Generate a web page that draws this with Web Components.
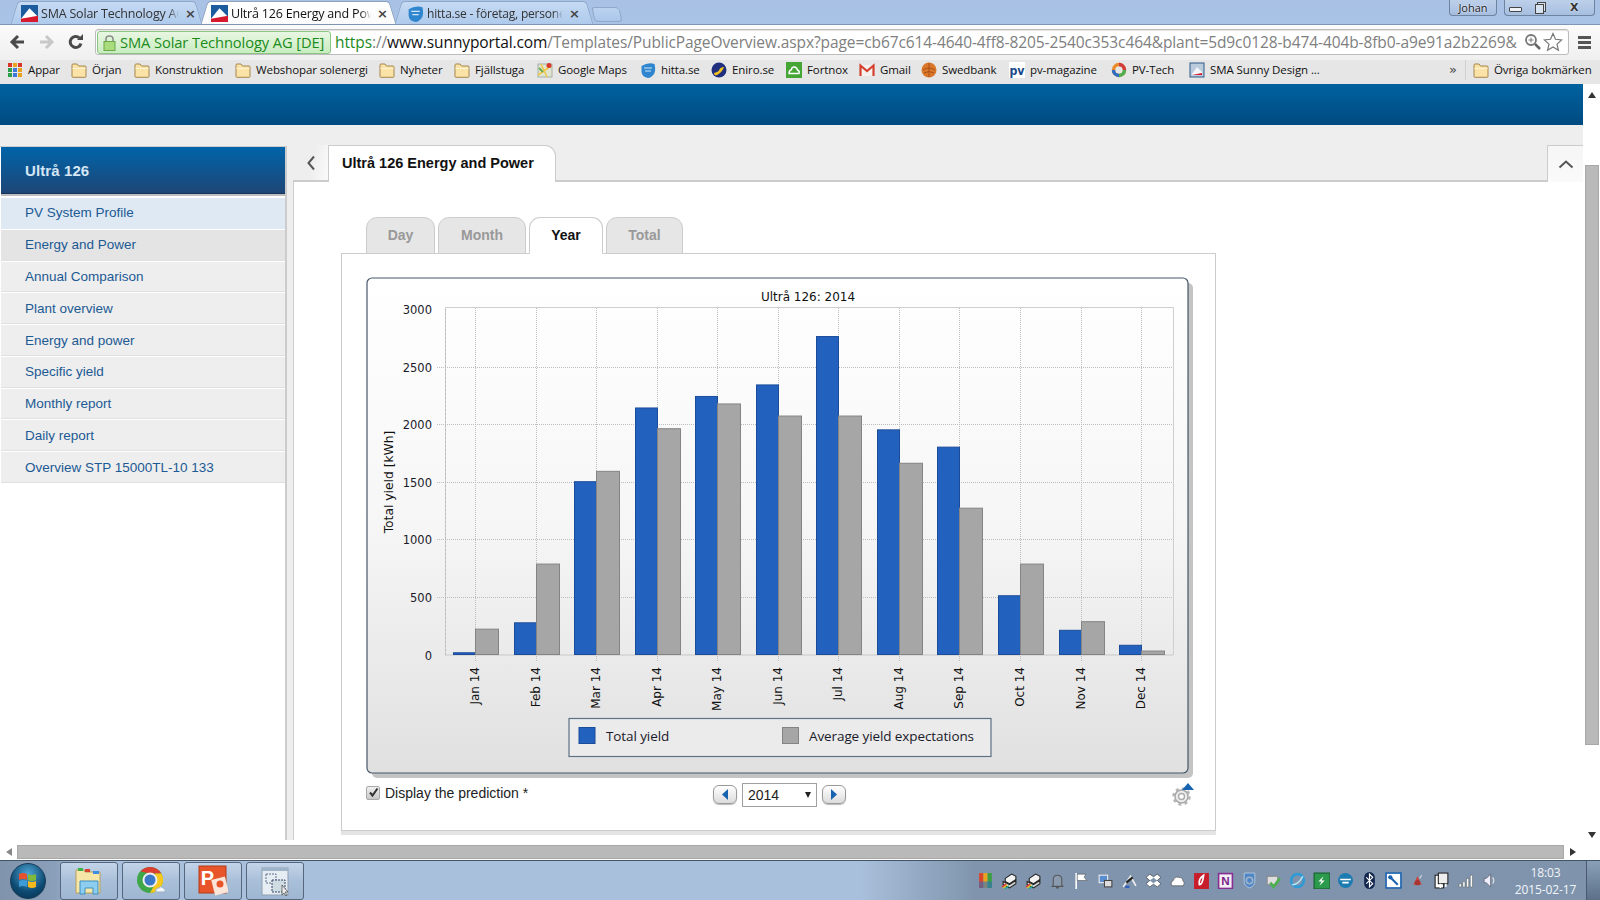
<!DOCTYPE html>
<html>
<head>
<meta charset="utf-8">
<title>Ultrå 126 Energy and Power</title>
<style>
  html, body { margin: 0; padding: 0; width: 1600px; height: 900px; overflow: hidden; background: #eee; }
  body { display: flex; flex-direction: column; font-family: "Liberation Sans", sans-serif; }
</style>
</head>
<body>
<browser-chrome></browser-chrome>
<portal-page></portal-page>
<page-hscroll></page-hscroll>
<win-taskbar></win-taskbar>

<script>
const svg16 = (body, size = 16) => `<svg width="${size}" height="${size}" viewBox="0 0 16 16" style="display:block;flex:none">${body}</svg>`;

const ICONS = {
  sma: `<rect width="16" height="16" fill="#1c5c9e"/><path d="M0 13L8 3l8 8v5H0z" fill="#fff"/><path d="M0 16v-3l16-3v6z" fill="#d7192d"/>`,
  hitta: `<path d="M1.500 4Q8 0 14.500 2q1.500 6-.5 10-3 4-6 4-6-1-6.500-6z" fill="#2f86cf"/><path d="M4 6h8M5 9h6" stroke="#cfe6fa" stroke-width="1.200"/>`,
  folder: `<path d="M1 14.500V3q0-1 1-1h4l1.500 2h6.500q1 0 1 1v9.500q0 .8-1 .8H2q-1 0-1-.8z" fill="#fbe2a6" stroke="#a5874e"/><path d="M1.500 6.500h13" stroke="#fff3d2"/>`,
  apps: [0,1,2].map(r => [0,1,2].map(c => `<rect x="${c*5+1}" y="${r*5+1}" width="4" height="4" fill="${[['#d9352a','#e8a21f','#d9352a'],['#2f9e4a','#3d79d8','#e8a21f'],['#2f9e4a','#3d79d8','#e8a21f']][r][c]}"/>`).join('')).join(''),
  maps: `<rect x="1" y="2" width="14" height="13" fill="#dfe5d2" stroke="#8d9a8d" stroke-width=".7"/><path d="M1 13L14 4M4 2l6 13" stroke="#f1c84a" stroke-width="1.600"/><path d="M2 6l4 4" stroke="#6da853" stroke-width="2"/><circle cx="12" cy="3.500" r="2.500" fill="#d8392b"/>`,
  eniro: `<circle cx="8" cy="8" r="7.500" fill="#1f2f7e"/><path d="M3 11Q8 10 9 6.500 11 4.500 13 5 11 11 5 13.500 3 13 3 11z" fill="#f3c21f"/>`,
  fortnox: `<rect width="16" height="16" fill="#45a535"/><path d="M3 11.500h10q1-2.500-1.500-3.500-1-3.500-4-3-2 .5-2 2.500Q3 8.500 3 11.500z" fill="none" stroke="#fff" stroke-width="1.400"/>`,
  gmail: `<rect x="1" y="3" width="14" height="11" fill="#f4f1ee"/><path d="M1.500 14V3.500L8 9l6.500-5.500V14" fill="none" stroke="#d5412f" stroke-width="2.200"/>`,
  swedbank: `<circle cx="8" cy="8" r="7.500" fill="#d9772b"/><path d="M2 8q6-4 12 0M3 11q5-3 10 0M8 1v14" stroke="#a84d18" stroke-width=".9" fill="none"/>`,
  pv: `<rect width="16" height="16" fill="#fff"/><text transform="translate(8 12.500) scale(.85 1)" text-anchor="middle" font-family="DejaVu Sans" font-weight="700" font-size="13" fill="#1b4a8a">pv</text>`,
  pvtech: `<circle cx="8" cy="8" r="5.500" fill="none" stroke-width="3.400" stroke="#e8892b"/><path d="M8 2.500A5.500 5.500 0 0 1 13.500 8" fill="none" stroke="#d23b3b" stroke-width="3.400"/><path d="M13.500 8A5.500 5.500 0 0 1 8 13.500" fill="none" stroke="#4caf50" stroke-width="3.400"/><path d="M8 13.500A5.500 5.500 0 0 1 2.500 8" fill="none" stroke="#2e6dc4" stroke-width="3.400"/>`,
  design: `<rect x="1" y="1" width="14" height="14" fill="#b9cbdc" stroke="#2f5a85"/><path d="M3 12L8 5l5 5v3H3z" fill="#f3f6f9"/><path d="M3 13l10-2v2z" fill="#d7192d"/>`
};

class BrowserTab extends HTMLElement {
  connectedCallback() {
    const active = this.hasAttribute('active');
    const bg = active ? 'linear-gradient(#fff,#fbfbfb)' : 'linear-gradient(#c6daf3,#aecaec)';
    const line = active ? '#8fa3bd' : '#8ea8c8';
    this.attachShadow({ mode: 'open' }).innerHTML = `
      <style>
        :host { display: flex; align-items: center; position: relative; width: ${this.getAttribute('w')}px; height: 24px; box-sizing: border-box; padding: 2px ${this.getAttribute('pr') || 9}px 0 ${this.getAttribute('pad') || 10}px; font: ${this.getAttribute('fs') || 12.5}px "Open Sans", sans-serif; letter-spacing: -.2px; color: ${active ? '#111' : '#333'}; z-index: ${active ? 2 : 1}; margin-right: -1px; flex: none; }
        .l, .r { position: absolute; top: 1px; bottom: 0; width: 55%; background: ${bg}; border-top: 1px solid ${line}; box-sizing: border-box; z-index: -1; }
        .l { left: 3px; transform: skewX(-17deg); border-left: 1px solid ${line}; border-top-left-radius: 4px; }
        .r { right: 3px; transform: skewX(17deg); border-right: 1px solid ${line}; border-top-right-radius: 4px; }
        .t { flex: 1; min-width: 0; margin-left: 3px; overflow: hidden; white-space: nowrap; -webkit-mask-image: linear-gradient(to left, transparent, #000 10px); }
        .x { width: 10px; flex: none; margin-left: 6px; color: #444; font: 700 13px "DejaVu Sans", sans-serif; }
      </style>
      <div class="l"></div><div class="r"></div>
      ${svg16(ICONS[this.getAttribute('icon')], 17)}
      <span class="t"><slot></slot></span><span class="x">×</span>`;
  }
}
customElements.define('browser-tab', BrowserTab);

class BookMark extends HTMLElement {
  connectedCallback() {
    const gap = this.getAttribute('gap') || 5;
    this.attachShadow({ mode: 'open' }).innerHTML = `
      <style>
        :host { display: flex; align-items: center; gap: ${gap}px; width: ${this.getAttribute('w')}px; flex: none; white-space: nowrap; }
      </style>
      ${svg16(ICONS[this.getAttribute('icon')])}<slot></slot>`;
  }
}
customElements.define('book-mark', BookMark);

class BrowserChrome extends HTMLElement {
  constructor() {
    super();
    this.attachShadow({ mode: 'open' }).innerHTML = `
      <style>
        :host { display: block; height: 84px; flex: none; }
        .strip { height: 24px; background: linear-gradient(#a8c1e4,#a9c3e6); display: flex; padding-left: 11px; position: relative; border-bottom: 1px solid #7f95b3; }
        .newtab { width: 26px; height: 13px; margin: 7px 0 0 1px; background: linear-gradient(#bcd3f0,#a9c6ea); border: 1px solid #8ea8c8; border-radius: 3px 5px 4px 4px; transform: skewX(12deg); flex: none; }
        .win { margin-left: auto; display: flex; gap: 7px; padding-right: 5px; }
        .win div { height: 16px; box-sizing: border-box; border: 1px solid #6d83a0; border-top: 0; border-radius: 0 0 4px 4px; background: linear-gradient(#bdd0ea,#a6bedf); display: flex; align-items: center; color: #222; text-shadow: 0 0 2px #fff; font: 11px "Open Sans", sans-serif; }
        .user { width: 48px; justify-content: center; }
        .ctrl { width: 91px; }
        .ctrl i { display: block; flex: none; }
        .min { width: 11px; height: 3px; border: 1px solid #444; background: #eef3fa; border-radius: 1px; margin: 4px 0 0 4px; }
        .max { width: 7px; height: 8px; border: 1px solid #444; background: #d8e3f2; box-shadow: 2px -2px 0 -1px #d8e3f2, 2px -2px 0 0 #444; margin: 3px 0 0 13px; }
        .close { font: 700 11px "DejaVu Sans", sans-serif; color: #333; margin-left: 26px; }
        .bar { height: 35px; background: linear-gradient(#fbfbfb,#efefef); display: flex; align-items: center; box-sizing: border-box; padding: 0 0 1px 8px; }
        .nav { width: 87px; display: flex; flex: none; }
        .nav svg { margin-right: 5px; }
        .nav svg:nth-child(2) { margin-right: 10px; }
        .omni { flex: none; width: 1474px; height: 26px; box-sizing: border-box; background: #fff; border: 1px solid #bcbcbc; border-radius: 3px; display: flex; align-items: center; padding: 0 1px; position: relative; box-shadow: inset 0 1px 1px #e4e4e4; }
        .ev { flex: none; width: 234px; height: 23px; box-sizing: border-box; border: 1px solid #8cc584; border-radius: 3px; background: linear-gradient(#e8f7e2,#c9ecc0); color: #1d8a1d; font: 14.700px "Open Sans", sans-serif; letter-spacing: -.1px; display: flex; align-items: center; gap: 4px; padding-left: 5px; white-space: nowrap; overflow: hidden; }
        .url { margin-left: 4px; width: 1186px; overflow: hidden; white-space: nowrap; font: 15.500px "Open Sans", sans-serif; letter-spacing: -.1px; color: #808080; flex: none; }
        .url b { font-weight: 400; color: #1d8a1d; } .url em { font-style: normal; color: #111; }
        .lens { margin-left: 3px; flex: none; } .star { margin-left: 2px; flex: none; }
        .menu { margin-left: 9px; width: 13px; height: 13px; flex: none; background: linear-gradient(#555 0 3px, transparent 3px 5px, #555 5px 8px, transparent 8px 10px, #555 10px 13px); }
        .marks { height: 25px; box-sizing: border-box; background: #e6e6e6; border-bottom: 1px solid #b3b3b3; display: flex; align-items: center; padding: 0 0 5px 7px; font: 11.500px "Open Sans", sans-serif; letter-spacing: -.1px; color: #111; }
        .more { margin-left: 121px; width: 16px; color: #444; font: 13px "DejaVu Sans", sans-serif; border-right: 1px solid #d0d0d0; margin-right: 7px; height: 20px; line-height: 20px; }
      </style>
      <div class="strip">
        <browser-tab w="191" icon="sma" pr="7">SMA Solar Technology AG</browser-tab>
        <browser-tab w="195" icon="sma" active>Ultrå 126 Energy and Pow</browser-tab>
        <browser-tab w="198" icon="hitta" pad="12" pr="14" fs="12">hitta.se - företag, persone</browser-tab>
        <div class="newtab"></div>
        <div class="win"><div class="user">Johan</div><div class="ctrl"><i class="min"></i><i class="max"></i><span class="close">X</span></div></div>
      </div>
      <div class="bar">
        <div class="nav">
          <svg width="22" height="18" viewBox="0 0 22 18"><path d="M16 9H5M10 3L4 9l6 6" fill="none" stroke="#4a4a4a" stroke-width="3"/></svg>
          <svg width="22" height="18" viewBox="0 0 22 18"><path d="M5 9h11M11 3l6 6-6 6" fill="none" stroke="#c8c8c8" stroke-width="3"/></svg>
          <svg width="18" height="18" viewBox="0 0 18 18"><path d="M14 10.500A5.500 5.500 0 1 1 12.500 5" fill="none" stroke="#4a4a4a" stroke-width="3"/><path d="M10 7l6 0 0-6z" fill="#4a4a4a"/></svg>
        </div>
        <div class="omni">
          <div class="ev"><svg width="13" height="17" viewBox="0 0 13 17" style="flex:none"><path d="M3 8V5q0-3 3.500-3T10 5v3" fill="none" stroke="#8c8c8c" stroke-width="1.600"/><rect x="1" y="7.500" width="11" height="9" fill="#a8dc7c" stroke="#6aa84a"/></svg>SMA Solar Technology AG [DE]</div>
          <div class="url"><b>https</b>://<em>www.sunnyportal.com</em>/Templates/PublicPageOverview.aspx?page=cb67c614-4640-4ff8-8205-2540c353c464&amp;plant=5d9c0128-b474-404b-8fb0-a9e91a2b2269&amp;</div>
          <svg class="lens" width="17" height="18" viewBox="0 0 17 18"><circle cx="7" cy="7" r="5" fill="none" stroke="#777" stroke-width="1.800"/><path d="M11 11l5 5" stroke="#666" stroke-width="2.500"/><path d="M4.500 7h5M7 4.500v5" stroke="#777"/></svg>
          <svg class="star" width="20" height="20" viewBox="0 0 20 20"><path d="M10 1.500l2.500 5.800 6.200.6-4.700 4.200 1.400 6.200L10 15l-5.400 3.300L6 12.100 1.300 7.900l6.200-.6z" fill="#fff" stroke="#777" stroke-width="1.200"/></svg>
        </div>
        <div class="menu"></div>
      </div>
      <div class="marks">
        <book-mark w="64" icon="apps">Appar</book-mark>
        <book-mark w="63" icon="folder">Örjan</book-mark>
        <book-mark w="101" icon="folder">Konstruktion</book-mark>
        <book-mark w="144" icon="folder">Webshopar solenergi</book-mark>
        <book-mark w="75" icon="folder">Nyheter</book-mark>
        <book-mark w="83" icon="folder">Fjällstuga</book-mark>
        <book-mark w="103" icon="maps">Google Maps</book-mark>
        <book-mark w="71" icon="hitta">hitta.se</book-mark>
        <book-mark w="75" icon="eniro">Eniro.se</book-mark>
        <book-mark w="73" icon="fortnox">Fortnox</book-mark>
        <book-mark w="62" icon="gmail">Gmail</book-mark>
        <book-mark w="88" icon="swedbank">Swedbank</book-mark>
        <book-mark w="102" icon="pv">pv-magazine</book-mark>
        <book-mark w="78" icon="pvtech">PV-Tech</book-mark>
        <book-mark w="139" icon="design">SMA Sunny Design ...</book-mark>
        <span class="more">»</span>
        <book-mark w="120" icon="folder">Övriga bokmärken</book-mark>
      </div>`;
  }
}
customElements.define('browser-chrome', BrowserChrome);

class SideNav extends HTMLElement {
  constructor() {
    super();
    const items = ['PV System Profile','Energy and Power','Annual Comparison','Plant overview','Energy and power','Specific yield','Monthly report','Daily report','Overview STP 15000TL-10 133'];
    this.attachShadow({ mode: 'open' }).innerHTML = `
      <style>
        :host { display: block; width: 287px; flex: none; box-sizing: border-box; background: #fff; border-top: 1px solid #ccc; border-right: 2px solid #ccc; padding: 0 0 0 1px; font: 13.500px "Liberation Sans", sans-serif; }
        .head { height: 47px; background: linear-gradient(#0064a9,#1e4677); border-bottom: 1px solid #16355a; box-sizing: border-box; display: flex; align-items: center; padding-left: 24px; color: #d5e6f4; font-weight: 700; font-size: 15px; letter-spacing: .1px; }
        .rule { height: 4px; box-sizing: border-box; border-top: 2px solid #bdbdbd; background: #fff; margin-bottom: 0; }
        ul { list-style: none; margin: 0; padding: 0; height: 285px; display: flex; flex-direction: column; gap: 1px; }
        li { flex: 1; background: #eee; color: #1c5a94; display: flex; align-items: center; padding-left: 24px; border-bottom: 1px solid #e0e0e0; }
        li:first-child { background: #dfe9f3; border-color: #dfe9f3; }
        li:nth-child(2) { background: #e4e4e4; }
      </style>
      <div class="head">Ultrå 126</div><div class="rule"></div>
      <ul>${items.map(i => `<li>${i}</li>`).join('')}</ul>`;
  }
}
customElements.define('side-nav', SideNav);

class YieldChart extends HTMLElement {
  constructor() {
    super();
    const months = ['Jan','Feb','Mar','Apr','May','Jun','Jul','Aug','Sep','Oct','Nov','Dec'];
    const total = [15,275,1500,2140,2240,2340,2760,1950,1800,510,210,80];
    const expected = [220,785,1590,1960,2175,2070,2070,1660,1270,785,285,30];
    const y0 = 654.5, k = 0.1152;
    const xs = months.map((_, i) => 475 + i * 60.55);
    let grid = '', bars = '', labels = '';
    for (let v = 500; v <= 2500; v += 500) {
      const y = Math.round(y0 - v * k) + .5;
      grid += `<line class="g" x1="437" x2="1173" y1="${y}" y2="${y}"/>`;
    }
    for (let v = 0; v <= 3000; v += 500) {
      labels += `<text class="tick" x="432" y="${y0 - v * k + 5}" text-anchor="end">${v}</text>`;
    }
    xs.forEach((x, i) => {
      const cx = Math.round(x) + .5;
      grid += `<line class="g" x1="${cx}" x2="${cx}" y1="308" y2="661"/>`;
      const a = total[i] * k, b = expected[i] * k;
      bars += `<rect x="${cx - 22}" y="${y0 - a}" width="22" height="${a}" fill="#2361bf" stroke="#1b4c9a"/>`;
      bars += `<rect x="${cx}" y="${y0 - b}" width="23" height="${b}" fill="#a6a6a6" stroke="#848484"/>`;
      labels += `<text class="mon" transform="translate(${cx + 3},667) rotate(-90)" text-anchor="end">${months[i]} 14</text>`;
    });
    this.attachShadow({ mode: 'open' }).innerHTML = `
      <style>
        :host { display: block; width: 827px; height: 501px; flex: none; }
        svg { display: block; }
        text { font-family: "DejaVu Sans", sans-serif; font-size: 12px; fill: #111; }
        .tick { font-size: 11.500px; fill: #1a1a2a; }
        .ytitle { font-size: 12.300px; }
        .g { stroke: #bdbdbd; stroke-dasharray: 1 1; shape-rendering: crispEdges; }
        .leg { font-family: "Open Sans", sans-serif; font-size: 13.500px; letter-spacing: -.1px; fill: #1a1a2a; }
      </style>
      <svg width="827" height="501" viewBox="366 277 827 501">
        <defs><linearGradient id="bg" x1="0" x2="0" y1="0" y2="1"><stop offset="0" stop-color="#fff"/><stop offset=".5" stop-color="#f6f6f6"/><stop offset="1" stop-color="#e0e0e0"/></linearGradient></defs>
        <rect x="372" y="283" width="821" height="495" rx="5" fill="#c4c4c4"/>
        <rect x="367" y="278" width="821" height="495" rx="5" fill="url(#bg)" stroke="#47586a" stroke-width="1.200"/>
        <path d="M445.500 655V307.500H1173.500V655" fill="none" stroke="#cfcfcf"/>
        <path d="M445.500 655V307.500" fill="none" stroke="#bbb" stroke-dasharray="2 2"/>
        ${grid}
        <line x1="445" x2="1173" y1="655" y2="655" stroke="#c8c8c8"/>
        ${bars}
        ${labels}
        <text x="808" y="301" text-anchor="middle">Ultrå 126: 2014</text>
        <text class="ytitle" transform="translate(393,482) rotate(-90)" text-anchor="middle">Total yield [kWh]</text>
        <rect x="569" y="718.500" width="422" height="38" fill="#ebebeb" stroke="#5d7286" stroke-width="1.200"/>
        <rect x="579" y="727.500" width="16" height="16" fill="#2361bf" stroke="#1b4c9a"/>
        <text class="leg" x="606" y="741">Total yield</text>
        <rect x="782.500" y="727.500" width="16" height="16" fill="#a6a6a6" stroke="#848484"/>
        <text class="leg" x="809" y="741">Average yield expectations</text>
      </svg>`;
  }
}
customElements.define('yield-chart', YieldChart);

class ChartControls extends HTMLElement {
  constructor() {
    super();
    const arrow = d => `<svg width="8" height="11" viewBox="0 0 8 11"><path d="${d}" fill="#1763b0"/></svg>`;
    this.attachShadow({ mode: 'open' }).innerHTML = `
      <style>
        :host { display: grid; grid-template-columns: 347px auto 1fr; align-items: center; height: 25px; margin-top: 4px; font: 14px "Liberation Sans", sans-serif; color: #222; width: 830px; }
        label { display: flex; align-items: center; gap: 5px; margin-top: -4px; }
        .cb { width: 14px; height: 14px; box-sizing: border-box; background: linear-gradient(#f0f0f0,#c8c8c8); border: 1px solid #aaa; border-radius: 2px; display: flex; align-items: center; justify-content: center; }
        .nav { display: flex; align-items: center; gap: 5px; }
        .btn { width: 24px; height: 19px; box-sizing: border-box; border: 1px solid #9a9a9a; border-radius: 6px; background: linear-gradient(#fff,#dcdcdc); display: flex; align-items: center; justify-content: center; box-shadow: 0 1px 1px #bbb; }
        .sel { width: 75px; height: 24px; box-sizing: border-box; border: 1px solid #a0a0a0; background: #fff; display: flex; align-items: center; justify-content: space-between; padding: 0 5px; }
        .sel i { width: 0; height: 0; border: 3.500px solid transparent; border-top: 6px solid #222; border-bottom: 0; }
        .gear { justify-self: end; position: relative; width: 26px; height: 24px; }
        .gear svg { position: absolute; }
      </style>
      <label><span class="cb"><svg width="11" height="11" viewBox="0 0 11 11"><path d="M2 5.500l2.500 3L9.500 1.500" fill="none" stroke="#333" stroke-width="2"/></svg></span>Display the prediction *</label>
      <div class="nav">
        <span class="btn">${arrow('M7 0v11L1 5.500z')}</span>
        <span class="sel">2014<i></i></span>
        <span class="btn">${arrow('M1 0v11l6-5.500z')}</span>
      </div>
      <div class="gear">
        <svg style="left:1px;top:3px" width="21" height="21" viewBox="0 0 21 21"><circle cx="10.500" cy="10.500" r="6.500" fill="#eee" stroke="#a8a8a8" stroke-width="1.500"/><circle cx="10.500" cy="10.500" r="8" fill="none" stroke="#b4b4b4" stroke-width="2.400" stroke-dasharray="3 3.300"/><circle cx="10.500" cy="10.500" r="3" fill="#fff" stroke="#aaa" stroke-width="1.400"/></svg>
        <svg style="right:2px;top:0" width="12" height="7" viewBox="0 0 12 7"><path d="M6 0l6 7H0z" fill="#1763b0"/></svg>
      </div>`;
  }
}
customElements.define('chart-controls', ChartControls);

class PeriodTabs extends HTMLElement {
  constructor() {
    super();
    const tabs = [['Day',69],['Month',88],['Year',74,1],['Total',77]];
    this.attachShadow({ mode: 'open' }).innerHTML = `
      <style>
        :host { display: flex; gap: 3px; height: 37px; margin-left: 25px; flex: none; position: relative; z-index: 1; margin-bottom: -1px; }
        div { box-sizing: border-box; border: 1px solid #ccc; border-radius: 11px 11px 0 0; background: #e6e6e6; color: #999; font: 700 14px "Liberation Sans", sans-serif; display: flex; align-items: center; justify-content: center; padding-bottom: 2px; }
        .on { background: #fff; color: #111; border-bottom-color: #fff; }
      </style>
      ${tabs.map(t => `<div class="${t[2] ? 'on' : ''}" style="width:${t[1]}px">${t[0]}</div>`).join('')}`;
  }
}
customElements.define('period-tabs', PeriodTabs);

class PortalPage extends HTMLElement {
  constructor() {
    super();
    this.attachShadow({ mode: 'open' }).innerHTML = `
      <style>
        :host { display: flex; height: 756px; flex: none; }
        .main { width: 1583px; flex: none; display: flex; flex-direction: column; background: #eee; }
        .banner { height: 41px; flex: none; background: linear-gradient(#00629f,#004a80); }
        .row { flex: 1; display: flex; padding-top: 21px; min-height: 0; }
        .content { flex: 1; margin: -1px 0 0 6px; display: flex; flex-direction: column; min-width: 0; }
        .tabbar { height: 37px; flex: none; display: flex; }
        .back { width: 35px; background: linear-gradient(100deg,#eee 55%,#fafafa); border-bottom: 2px solid #ccc; box-sizing: border-box; display: flex; align-items: center; justify-content: center; }
        .title { width: 228px; box-sizing: border-box; background: #fff; border: 1px solid #ccc; border-bottom: 0; border-radius: 0 11px 0 0; font: 700 14.500px "Liberation Sans", sans-serif; color: #111; padding: 9px 0 0 13px; }
        .fill { flex: 1; border-bottom: 2px solid #ccc; }
        .up { width: 36px; background: linear-gradient(#f6f6f6,#fafafa); border: 1px solid #ccc; border-width: 1px 0 0 1px; box-sizing: border-box; display: flex; align-items: center; justify-content: center; }
        .panel { flex: 1; background: #fff; border-left: 1px solid #ccc; padding: 35px 0 0 47px; display: flex; flex-direction: column; min-height: 0; }
        .box { width: 875px; height: 578px; box-sizing: border-box; background: #fff; border: 1px solid #ccc; box-shadow: 0 4px 0 #e4e4e4; padding: 23px 0 0 24px; flex: none; }
        .vbar { width: 17px; flex: none; background: #fff; display: flex; flex-direction: column; align-items: center; }
        .thumb { width: 14px; height: 580px; margin-top: 67px; background: #b9b9b9; border: 1px solid #a8a8a8; box-sizing: border-box; flex: none; }
        .tri-u { width: 0; height: 0; border: 4px solid transparent; border-bottom: 6px solid #333; border-top: 0; margin-top: 8px; flex: none; }
        .tri-d { width: 0; height: 0; border: 4px solid transparent; border-top: 6px solid #333; border-bottom: 0; margin-top: 87px; flex: none; }
      </style>
      <div class="main">
        <div class="banner"></div>
        <div class="row">
          <side-nav></side-nav>
          <div class="content">
            <div class="tabbar">
              <div class="back"><svg width="10" height="16" viewBox="0 0 10 16"><path d="M8 1.500L2.500 8 8 14.500" fill="none" stroke="#555" stroke-width="2"/></svg></div>
              <div class="title">Ultrå 126 Energy and Power</div>
              <div class="fill"></div>
              <div class="up"><svg width="16" height="10" viewBox="0 0 16 10"><path d="M1.500 8.500L8 2.500l6.500 6" fill="none" stroke="#555" stroke-width="2"/></svg></div>
            </div>
            <div class="panel">
              <period-tabs></period-tabs>
              <div class="box">
                <yield-chart></yield-chart>
                <chart-controls></chart-controls>
              </div>
            </div>
          </div>
        </div>
      </div>
      <div class="vbar"><i class="tri-u"></i><div class="thumb"></div><i class="tri-d"></i></div>`;
  }
}
customElements.define('portal-page', PortalPage);

class PageHscroll extends HTMLElement {
  constructor() {
    super();
    this.attachShadow({ mode: 'open' }).innerHTML = `
      <style>
        :host { display: flex; height: 20px; flex: none; background: #fff; align-items: center; padding-top: 3px; box-sizing: border-box; }
        .t { width: 0; height: 0; border: 4px solid transparent; }
        .l { border-right: 6px solid #888; border-left: 0; margin: 0 5px 0 6px; }
        .r { border-left: 6px solid #333; border-right: 0; margin-left: 6px; }
        .thumb { width: 1547px; height: 14px; background: #b9b9b9; border: 1px solid #a8a8a8; box-sizing: border-box; flex: none; }
      </style>
      <i class="t l"></i><div class="thumb"></div><i class="t r"></i>`;
  }
}
customElements.define('page-hscroll', PageHscroll);

const PRINTER = `<path d="M4 6l6-4 4 2v3l-6 4-4-2z" fill="#f4f4f4" stroke="#222"/><path d="M2 9l6 3 6-4v3l-6 4-6-3z" fill="#ddd" stroke="#222"/><path d="M1 14l4-3" stroke="#d33" stroke-width="1.300"/><path d="M2 15l4-3" stroke="#e8c21f" stroke-width="1.300"/><path d="M3.500 16l4-3" stroke="#2a9" stroke-width="1.300"/>`;
const TRAY = [
  `<rect x="2" y="1" width="4" height="14" fill="#d9452b"/><rect x="6" y="1" width="4" height="14" fill="#e8a21f"/><rect x="10" y="1" width="4" height="14" fill="#3d9e42"/><rect x="2" y="9" width="12" height="6" fill="#2f6fbf" opacity=".6"/>`,
  PRINTER,
  PRINTER,
  `<path d="M4 12V7q0-4 4-4t4 4v5l1 1.500H3z" fill="#8a9bb0" stroke="#555"/><circle cx="8" cy="14.500" r="1.200" fill="#555"/>`,
  `<path d="M3 1v15" stroke="#fff" stroke-width="1.500"/><path d="M4 2h8l-1.500 3L13 8H4z" fill="#fff" stroke="#444" stroke-width=".5"/>`,
  `<rect x="2" y="3" width="8" height="7" fill="#5a8ed0" stroke="#eee"/><rect x="7" y="8" width="7" height="6" fill="#ddd" stroke="#444"/>`,
  `<path d="M2 14L9 4l5 9" fill="none" stroke="#eee" stroke-width="1.600"/><path d="M5 10l6-5" stroke="#222" stroke-width="2"/><path d="M4 14h4" stroke="#2a5cc0" stroke-width="2"/>`,
  `<path d="M4.500 2L1 5l3.500 3L1 11l3.500 3L8 11.500l3.500 2.500L15 11l-3.500-3L15 5l-3.500-3L8 4.500z" fill="#fff" stroke="#333" stroke-width=".6"/><path d="M4.500 8L8 5.500 11.500 8 8 10.500z" fill="#7f94ac"/>`,
  `<path d="M3 13q-2.500-3 1-5 1-4 5-3 4 0 4 3 2.500 2 .5 5z" fill="#fff" stroke="#444" stroke-width=".6"/>`,
  `<rect x="1" y="1" width="14" height="15" fill="#c81d2a"/><path d="M10 3Q5 6 6 12q3 0 4-9z" fill="none" stroke="#fff" stroke-width="1.600"/>`,
  `<rect x="1.500" y="1.500" width="13" height="14" fill="#f4eef6" stroke="#8a2d93" stroke-width="1.500"/><text x="8" y="12.500" text-anchor="middle" font-family="Liberation Sans" font-weight="700" font-size="11" fill="#7a1f86">N</text>`,
  `<path d="M3 1h10v8q0 4-5 6-5-2-5-6z" fill="#4f86c6" stroke="#c5d6e8" stroke-width=".7"/><circle cx="8" cy="8" r="3" fill="none" stroke="#9fb4c8" stroke-width="1.500"/>`,
  `<rect x="2" y="4" width="10" height="8" fill="#ddd" stroke="#888"/><path d="M5 10l3 4 6-8" fill="none" stroke="#4caf50" stroke-width="2.500"/>`,
  `<circle cx="8" cy="8" r="6" fill="none" stroke="#2e9ad6" stroke-width="2.500"/><path d="M3 12q6 0 10-8" stroke="#bfe4f7" stroke-width="1.500" fill="none"/>`,
  `<rect x="1" y="1" width="15" height="15" fill="#2c9a4c" stroke="#155c2a"/><path d="M10 4L5 9h3l-2 4 5-5H8z" fill="#fff"/>`,
  `<circle cx="8" cy="8" r="7" fill="#1c7bb0"/><path d="M3 7h10M5 10h6" stroke="#fff" stroke-width="1.500"/>`,
  `<rect x="3" y="0" width="10" height="16" rx="5" fill="#12264e"/><path d="M5 5l6 6-3 3V2l3 3-6 6" fill="none" stroke="#fff" stroke-width="1.100"/>`,
  `<rect x="1" y="1" width="14" height="14" fill="#fff" stroke="#1c63b0" stroke-width="1.500"/><path d="M4 4l8 8" stroke="#1c63b0" stroke-width="2"/><circle cx="5" cy="5" r="2" fill="#1c63b0"/>`,
  `<path d="M4 12L8 4l4 8z" fill="#c9443a"/><circle cx="8" cy="10" r="2.500" fill="#a33"/><path d="M12 3l-2 3" stroke="#ddd"/>`,
  `<rect x="2" y="3" width="8" height="12" fill="#fff" stroke="#222"/><rect x="5" y="1" width="9" height="10" fill="#eee" stroke="#222"/><path d="M7 11v4M12 11v3" stroke="#fff" stroke-width="1.500"/>`,
  `<path d="M2 14h2v-3H2zM5.500 14h2V9h-2zM9 14h2V6H9zM12.500 14h2V3h-2z" fill="#fff" stroke="#444" stroke-width=".4"/>`,
  `<path d="M3 6h2l4-4v12l-4-4H3z" fill="#eef" stroke="#444" stroke-width=".5"/><path d="M11 5q2 3 0 6" fill="none" stroke="#ddd" stroke-width="1.200"/>`
];

class WinTaskbar extends HTMLElement {
  constructor() {
    super();
    this.attachShadow({ mode: 'open' }).innerHTML = `
      <style>
        :host { display: flex; height: 40px; flex: none; box-sizing: border-box; align-items: center; border-top: 1px solid #42536a; background: linear-gradient(90deg,#7f93ac 0,#8a9fba 55px,#a9c0dc 90px,#a9c0dc 860px,#8095ad 975px,#7f94ac 100%); }
        .orb { width: 36px; height: 36px; margin: 0 14px 0 10px; border-radius: 50%; flex: none; background: radial-gradient(circle at 50% 30%,#4fa7d8,#0d4a72 60%,#062e4c); border: 1px solid #183a55; box-sizing: border-box; display: flex; align-items: center; justify-content: center; }
        .app { width: 58px; height: 38px; margin-right: 4px; box-sizing: border-box; flex: none; border: 1px solid #56677d; border-radius: 3px; background: linear-gradient(#c3d4e8,#a9bfd9 50%,#9fb6d2); display: flex; align-items: center; justify-content: center; }
        .tray { margin-left: auto; display: flex; align-items: center; width: 528px; flex: none; }
        .tray span { width: 24px; display: flex; justify-content: center; flex: none; }
        .clock { width: 69px; flex: none; color: #f1f5fa; font: 12px "Open Sans", sans-serif; text-align: center; line-height: 17px; letter-spacing: -.1px; margin-left: 10px; }
        .desk { width: 14px; height: 100%; flex: none; margin-left: 6px; background: linear-gradient(#8aa0b8,#5c7189); border-left: 1px solid #4a5a6d; box-sizing: border-box; }
      </style>
      <div class="orb">
        <svg width="20" height="19" viewBox="0 0 20 19"><path d="M1 3q4-2 8 0v6q-4-2-8 0z" fill="#e8532f"/><path d="M10 3q4 2 8 0v6q-4 2-8 0z" fill="#7fba3a"/><path d="M1 10q4-2 8 0v6q-4-2-8 0z" fill="#3f9bd8"/><path d="M10 10q4 2 8 0v6q-4 2-8 0z" fill="#f6b91d"/></svg>
      </div>
      <div class="app"><svg width="32" height="30" viewBox="0 0 32 30"><path d="M3 27V4h8l1 2h15v21z" fill="#f6e6a8" stroke="#b89f5a"/><path d="M5 2h5v3H5z" fill="#3bb34a"/><path d="M12 3h5v3h-5z" fill="#d9432f"/><path d="M20 5h6v3h-6z" fill="#3f8fe0"/><path d="M7 28V15h18v13h-5v-6h-8v6z" fill="#8ccdf0" stroke="#3f8fbf"/></svg></div>
      <div class="app"><svg width="30" height="30" viewBox="0 0 30 30"><circle cx="14" cy="14" r="13" fill="#3fa64a"/><path d="M14 1a13 13 0 0 1 11.300 6.500L14 7.500 4.500 5.500A13 13 0 0 1 14 1z" fill="#dc3e2f"/><path d="M25.300 7.500A13 13 0 0 1 14 27l6-11-1-8.500z" fill="#f6c81f"/><circle cx="14" cy="14" r="6.500" fill="#3c78c8" stroke="#eee" stroke-width="2"/><path d="M20 26q-1-4 3-4 2-3 4 0 3 0 2 4z" fill="#f1f4f8" stroke="#9bb2c9"/></svg></div>
      <div class="app"><svg width="30" height="32" viewBox="0 0 30 32"><rect x="1" y="1" width="27" height="27" fill="#e8552a" stroke="#b23c18"/><rect x="15" y="13" width="14" height="16" fill="#fbe4d8" transform="rotate(-14 22 21)"/><circle cx="22" cy="19" r="3.500" fill="#e8552a"/><text x="9.500" y="20" text-anchor="middle" font-family="Liberation Sans" font-weight="700" font-size="20" fill="#fff">P</text></svg></div>
      <div class="app"><svg width="30" height="32" viewBox="0 0 30 32"><rect x="2" y="3" width="26" height="27" fill="#e6edf3" stroke="#8fa0b2"/><rect x="2" y="3" width="26" height="3" fill="#9fb3c8"/><rect x="6" y="9" width="10" height="9" fill="none" stroke="#5a6f8f" stroke-dasharray="2 1"/><rect x="12" y="15" width="13" height="12" fill="#cfdce2" stroke="#37486a" stroke-dasharray="2 1"/><path d="M22 20v10l2-2 2 3 1-1-2-3h3z" fill="#eee" stroke="#444" stroke-width=".7"/></svg></div>
      <div class="tray">${TRAY.map(b => `<span>${svg16(b, 17)}</span>`).join('')}</div>
      <div class="clock">18:03<br>2015-02-17</div>
      <div class="desk"></div>`;
  }
}
customElements.define('win-taskbar', WinTaskbar);
</script>
</body>
</html>
